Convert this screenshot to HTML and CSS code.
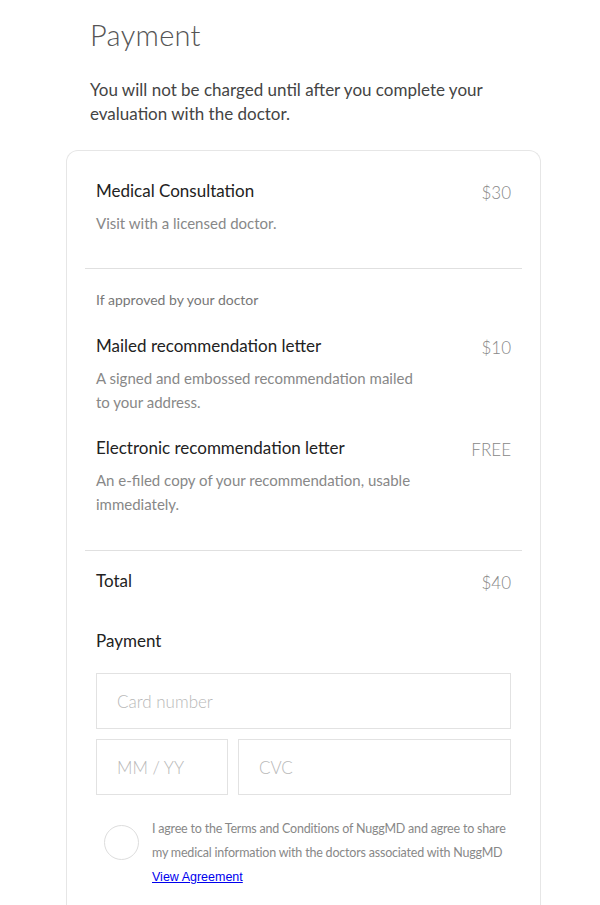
FILE: index.html
```html
<!DOCTYPE html>
<html>
<head>
<meta charset="utf-8">
<link rel="stylesheet" href="styles.css">
</head>
<body>
<div class="page">
  <h1 class="title">Payment</h1>
  <p class="intro">You will not be charged until after you complete your evaluation with the doctor.</p>
  <div class="card">
    <div class="section first">
      <div class="row">
        <div class="name">Medical Consultation</div>
        <div class="price">$30</div>
      </div>
      <div class="desc">Visit with a licensed doctor.</div>
    </div>
    <div class="section mid">
      <div class="note">If approved by your doctor</div>
      <div class="row">
        <div class="name">Mailed recommendation letter</div>
        <div class="price">$10</div>
      </div>
      <div class="desc">A signed and embossed recommendation mailed to your address.</div>
      <div class="row row2">
        <div class="name">Electronic recommendation letter</div>
        <div class="price">FREE</div>
      </div>
      <div class="desc">An e-filed copy of your recommendation, usable immediately.</div>
    </div>
    <div class="section last">
      <div class="row">
        <div class="name">Total</div>
        <div class="price">$40</div>
      </div>
      <div class="pay-label">Payment</div>
      <div class="field full">Card number</div>
      <div class="fields">
        <div class="field exp">MM / YY</div>
        <div class="field cvc">CVC</div>
      </div>
      <div class="agree">
        <div class="circle"></div>
        <div class="terms">
          <div>I agree to the Terms and Conditions of NuggMD and agree to share my medical information with the doctors associated with NuggMD</div>
          <a href="#" class="link">View Agreement</a>
        </div>
      </div>
    </div>
  </div>
</div>
</body>
</html>
```

FILE: styles.css
```css
html, body {
  margin: 0;
  padding: 0;
  background: #fff;
}
body {
  font-family: "Lato", "Noto Sans", sans-serif;
  color: #333;
}
.page {
  padding: 0 59px 0 66px;
}
.title {
  margin: 0 0 0 24px;
  padding-top: 16px;
  font-size: 29px;
  font-weight: 300;
  color: #555;
  line-height: 38px;
  letter-spacing: 0.3px;
}
.intro {
  margin: 24px 0 0 24px;
  font-size: 17px;
  line-height: 24px;
  color: #444;
  font-weight: 400;
  max-width: 400px;
}
.card {
  margin-top: 24px;
  border: 1px solid #e6e6e6;
  border-bottom: none;
  border-radius: 12px 12px 0 0;
  padding: 0 18px;
  height: 760px;
}
.section {
  padding: 0 11px;
}
.section.first {
  padding-top: 27px;
  padding-bottom: 33px;
}
.section.mid {
  border-top: 1px solid #e0e0e0;
  padding-top: 20px;
  padding-bottom: 34px;
}
.section.last {
  border-top: 1px solid #e0e0e0;
  padding-top: 17px;
}
.row {
  display: flex;
  justify-content: space-between;
  align-items: baseline;
}
.name {
  font-size: 17px;
  line-height: 26px;
  color: #222;
}
.price {
  font-size: 17px;
  color: #888;
  font-weight: 300;
  position: relative;
  top: 2px;
}
.desc {
  margin-top: 7px;
  font-size: 15px;
  line-height: 24px;
  color: #888;
  max-width: 330px;
}
.note {
  font-size: 14px;
  line-height: 22px;
  color: #777;
  margin-bottom: 22px;
}
.row2 {
  margin-top: 21px;
}
.pay-label {
  margin-top: 34px;
  font-size: 17px;
  line-height: 26px;
  color: #222;
}
.field {
  box-sizing: border-box;
  height: 56px;
  border: 1px solid #e2e2e2;
  display: flex;
  align-items: center;
  padding-left: 20px;
  font-size: 17px;
  font-weight: 300;
  color: #b8b8b8;
}
.field.full {
  margin-top: 19px;
}
.fields {
  display: flex;
  gap: 10px;
  margin-top: 10px;
}
.field.exp {
  width: 132px;
}
.field.cvc {
  flex: 1;
}
.agree {
  display: flex;
  align-items: flex-start;
  margin-top: 22px;
  padding-left: 8px;
}
.circle {
  flex: none;
  width: 33px;
  height: 33px;
  border: 1px solid #ddd;
  border-radius: 50%;
  margin-top: 8px;
  margin-right: 13px;
}
.terms {
  font-size: 12.5px;
  letter-spacing: -0.2px;
  line-height: 24px;
  color: #888;
}
.link {
  color: #0000ee;
  text-decoration: underline;
  font-family: "Liberation Sans", Arial, sans-serif;
  font-size: 12.5px;
  letter-spacing: 0;
}
```
